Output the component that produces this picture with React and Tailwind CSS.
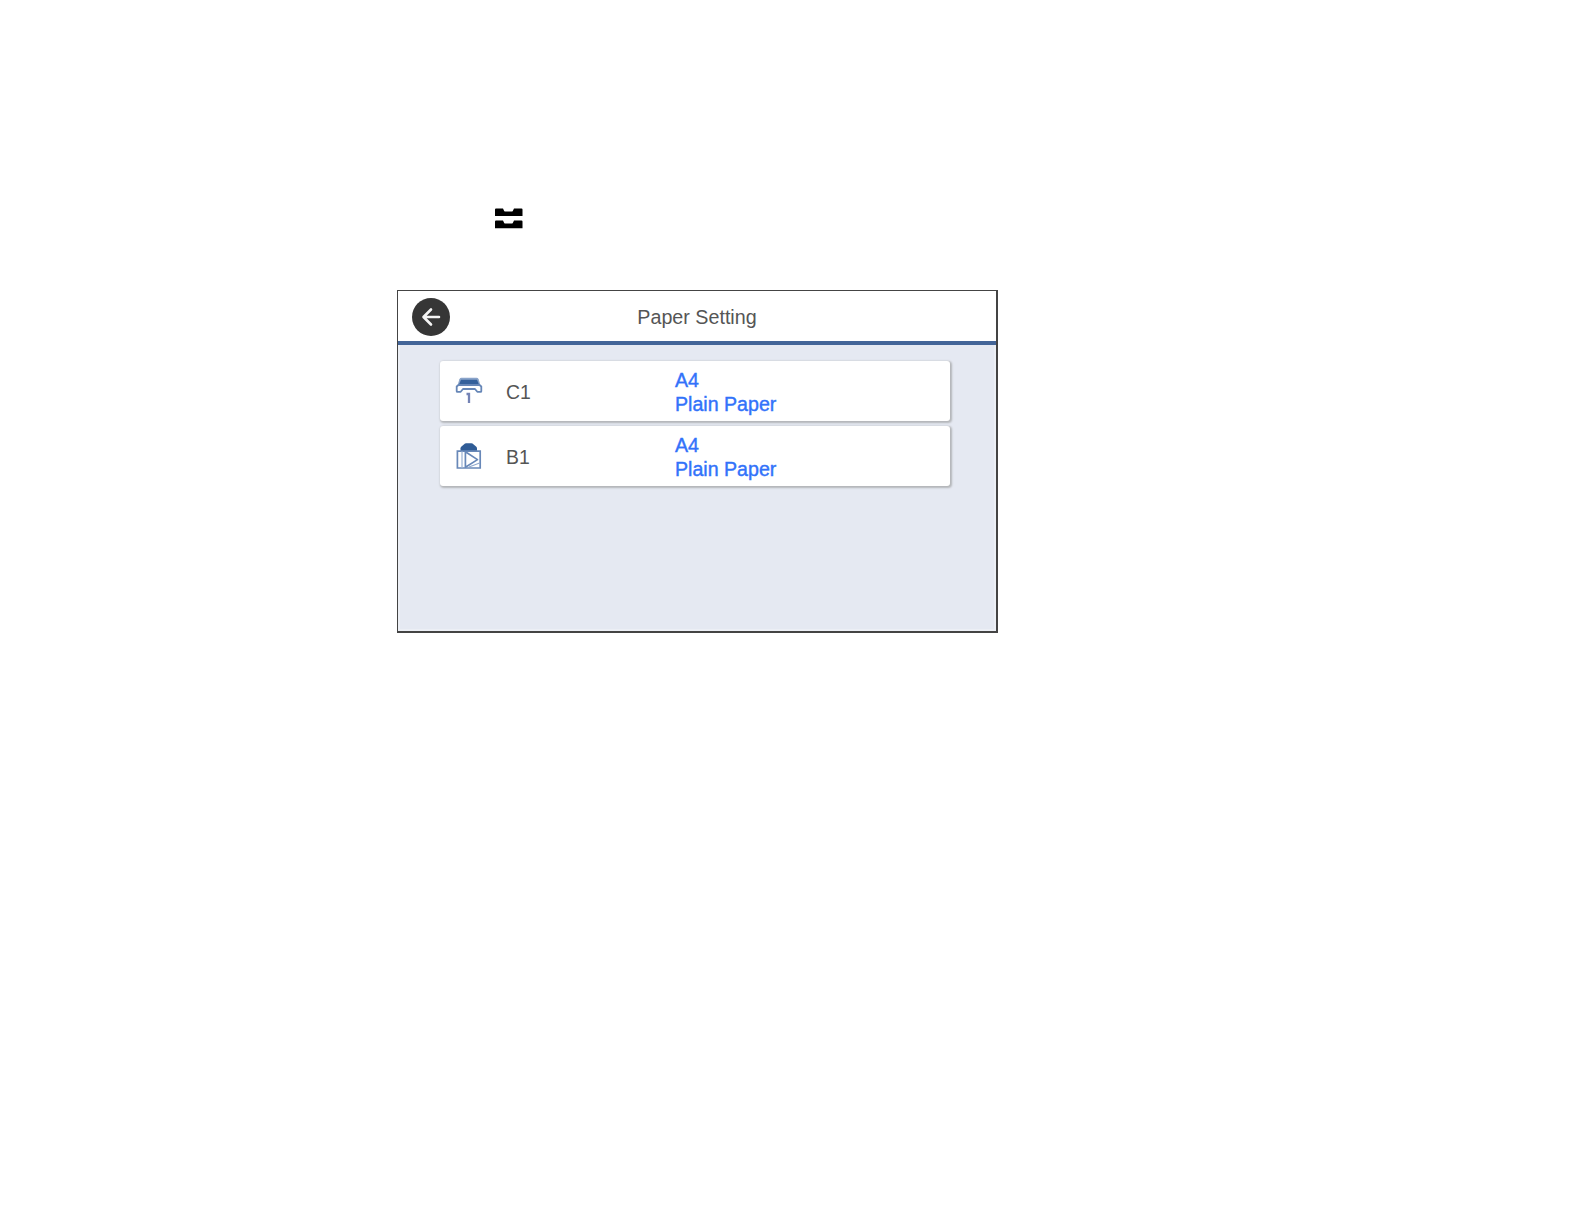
import React from 'react';

const TrayIcon = () => (
    <svg width="28" height="22" viewBox="0 0 28 22" fill="#000" className="shrink-0">
        <path d="M1 0.5H8L9.2 3Q9.6 3.6 10.5 3.6H16.5Q17.4 3.6 17.8 3L19 0.5H26.5Q27.5 0.5 27.5 1.5V8H0V1.5Q0 0.5 1 0.5Z" />
        <path d="M1 12.4H8L9.2 14.9Q9.6 15.5 10.5 15.5H16.5Q17.4 15.5 17.8 14.9L19 12.4H26.5Q27.5 12.4 27.5 13.4V20.2H0V13.4Q0 12.4 1 12.4Z" />
    </svg>
);

const BackIcon = () => (
    <svg width="38" height="38" viewBox="0 0 38 38" fill="none">
        <circle cx="19" cy="19" r="19" fill="#363636" />
        <path d="M19 11.5L11.5 19L19 26.5M11.8 19H27" stroke="#f4f4f4" strokeWidth="2.6" strokeLinecap="round" strokeLinejoin="round" />
    </svg>
);

const CassetteIcon = () => (
    <svg width="28" height="28" viewBox="0 0 28 28" fill="none">
        <path d="M6.5 0.8H21.5Q23 0.8 23.6 2.2L25.4 8.2H2.6L4.4 2.2Q5 0.8 6.5 0.8Z" fill="#8aa4ca" />
        <path d="M6 2.8H22L24 7.6H4Z" fill="#34609b" />
        <path d="M3.5 8L1.7 9.5V14.2Q1.7 14.8 2.4 14.8H5.7L8 12H20L22.3 14.8H25.6Q26.3 14.8 26.3 14.2V9.5L24.5 8Z" fill="#fff" stroke="#6686b7" strokeWidth="1.8" strokeLinejoin="round" />
        <path d="M11.5 17H14V26" stroke="#7483b5" strokeWidth="2.3" />
    </svg>
);

const RearTrayIcon = () => (
    <svg width="28" height="28" viewBox="0 0 28 28" fill="none">
        <path d="M5.5 9V6.2Q5.5 5.4 6.2 4.8L10 1.6Q10.5 1.2 11.2 1.2H16.3Q17 1.2 17.5 1.6L21.3 4.8Q22 5.4 22 6.2V9Z" fill="#2f5c96" />
        <path d="M2.4 9.2H25.2V26H2.4Z" fill="#fff" stroke="#6888b8" strokeWidth="1.7" />
        <path d="M7 9.5V25.5" stroke="#a9bcd9" strokeWidth="1.4" />
        <path d="M10.4 9.8V25.2L22.5 17.6Z" stroke="#6888b8" strokeWidth="1.7" strokeLinejoin="round" />
        <path d="M14 25L24.6 21" stroke="#8fa8cd" strokeWidth="1.2" />
    </svg>
);

const sources = [
    { name: 'C1', size: 'A4', type: 'Plain Paper', Icon: CassetteIcon },
    { name: 'B1', size: 'A4', type: 'Plain Paper', Icon: RearTrayIcon },
];

const SourceRow = ({ name, size, type, Icon }) => (
    <button className="flex h-[60px] w-[510px] items-center rounded-[3px] bg-white pl-[15px] text-left shadow-[1px_1px_2px_1px_#b4b6b9]">
        <Icon />
        <span className="ml-[23px] w-[169px] pt-px text-[19.4px] leading-6 text-[#555]">{name}</span>
        <span className="flex flex-col pt-px text-[19.6px] leading-6 text-[#3272fa] [-webkit-text-stroke:0.4px_#3272fa]">
            <span>{size}</span>
            <span>{type}</span>
        </span>
    </button>
);

const App = () => {
    return (
        <div className="h-[1224px] w-[1584px] bg-white pt-[208px] pl-[397px] font-['Liberation_Sans',Arial,sans-serif]">
            <div className="flex h-[82px] items-start pl-[97.5px]">
                <TrayIcon />
            </div>

            <div className="flex h-[343px] w-[601px] flex-col border-t border-r-2 border-b-2 border-l border-[#444] bg-[#e5e9f2]">
                <header className="grid h-[54px] shrink-0 grid-cols-[38px_1fr_52px] items-center border-b-4 border-[#436598] bg-white pt-px pl-[14px]">
                    <button className="w-[38px]">
                        <BackIcon />
                    </button>
                    <h1 className="text-center text-[19.7px] leading-6 text-[#555]">Paper Setting</h1>
                </header>

                <main className="flex flex-1 flex-col gap-[5px] border-x-2 border-b-2 border-[#eceff5] pt-[16px] pl-[40px]">
                    {sources.map((source) => (
                        <SourceRow key={source.name} {...source} />
                    ))}
                </main>
            </div>
        </div>
    );
};

export default App;
